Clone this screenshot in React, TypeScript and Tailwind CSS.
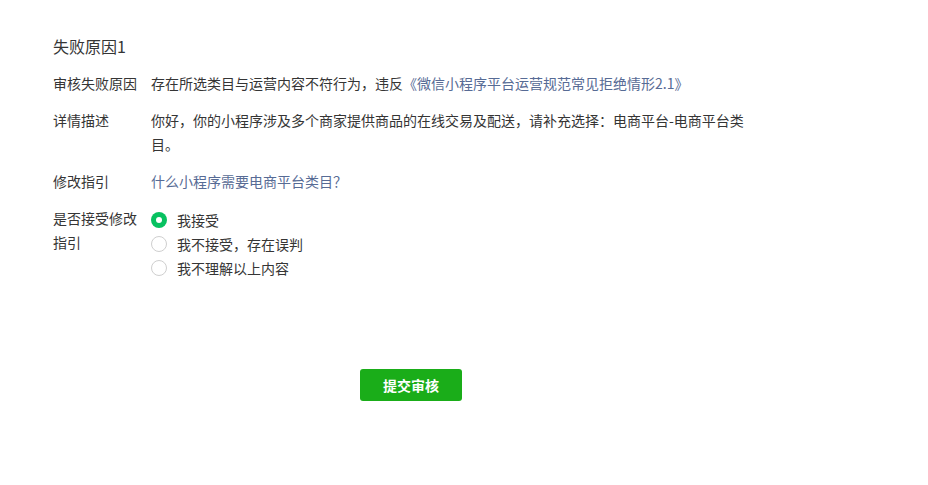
import React from "react";

const font = { fontFamily: '"Noto Sans CJK SC", "Noto Sans", sans-serif' };

function Row({ label, children }: { label: React.ReactNode; children: React.ReactNode }) {
  return (
    <div className="flex mt-[13px] text-[14px] leading-[24px] text-[#353535]">
      <div className="w-[98px] shrink-0 pr-[8px]">{label}</div>
      <div className="w-[600px]">{children}</div>
    </div>
  );
}

function Radio({ checked, label }: { checked?: boolean; label: string }) {
  return (
    <div className="flex items-center h-[24px]">
      {checked ? (
        <span className="w-[16px] h-[16px] rounded-full bg-[#07c160] flex items-center justify-center">
          <span className="w-[6px] h-[6px] rounded-full bg-white" />
        </span>
      ) : (
        <span className="w-[16px] h-[16px] rounded-full border border-[#cfcfcf] bg-white" />
      )}
      <span className="ml-[10px]">{label}</span>
    </div>
  );
}

export default function App() {
  return (
    <div className="w-[928px] h-[485px] bg-white pl-[53px] pt-[34px]" style={font}>
      <div className="text-[16px] leading-[24px] text-[#353535]">失败原因1</div>
      <Row label="审核失败原因">
        存在所选类目与运营内容不符行为，违反
        <span className="text-[#576b95]">《微信小程序平台运营规范常见拒绝情形2.1》</span>
      </Row>
      <Row label="详情描述">
        你好，你的小程序涉及多个商家提供商品的在线交易及配送，请补充选择：电商平台-电商平台类目。
      </Row>
      <Row label="修改指引">
        <span className="text-[#576b95]">什么小程序需要电商平台类目？</span>
      </Row>
      <Row label="是否接受修改指引">
        <div className="flex flex-col pt-[2px]">
          <Radio checked label="我接受" />
          <Radio label="我不接受，存在误判" />
          <Radio label="我不理解以上内容" />
        </div>
      </Row>
      <div className="w-[716px] flex justify-center mt-[89px]">
        <button className="w-[102px] h-[32px] rounded-[3px] bg-[#1aad19] text-white text-[14px] font-bold">
          提交审核
        </button>
      </div>
    </div>
  );
}
